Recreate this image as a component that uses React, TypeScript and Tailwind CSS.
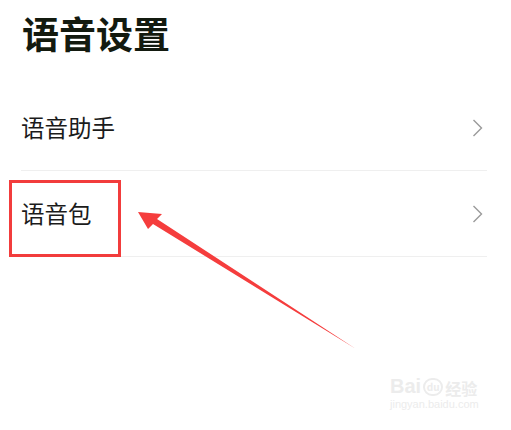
const cjk = { fontFamily: '"Noto Sans CJK SC", "Noto Sans", sans-serif' };

const Chevron = () => (
  <svg width="11" height="18" viewBox="0 0 11 18" fill="none" className="shrink-0">
    <polyline points="1.5,1 9.5,9 1.5,17" stroke="#9a9a9a" strokeWidth="1.4" />
  </svg>
);

const Row = ({ label }: { label: string }) => (
  <div className="flex h-[86px] items-center justify-between border-b border-[#efefef] pr-[4px]">
    <span className="text-[23.5px] leading-none text-[#1b1b1b]">{label}</span>
    <Chevron />
  </div>
);

export default function App() {
  return (
    <div className="relative h-[430px] w-[511px] overflow-hidden bg-white" style={cjk}>
      <div className="pl-[21px]">
        <h1 className="pl-[1px] pt-[15px] text-[37px] font-bold leading-none text-[#131a0f]">
          语音设置
        </h1>
        <div className="mt-[33px] w-[466px]">
          <Row label="语音助手" />
          <Row label="语音包" />
        </div>
      </div>

      {/* annotation box */}
      <div className="absolute left-[9px] top-[180px] h-[77px] w-[112px] border-[3px] border-[#f23c3c]" />

      {/* annotation arrow */}
      <svg className="absolute left-0 top-0" width="511" height="430" viewBox="0 0 511 430">
        <path
          d="M138 212 L162 214 L157 219 L356 349 L153 224 L148 229 Z"
          fill="#f53d3d"
        />
      </svg>

      {/* watermark */}
      <div className="absolute left-[390px] top-[376px] flex flex-col text-[#ececec]">
        <div className="flex items-end gap-[2px]">
          <span className="text-[20px] font-bold leading-none" style={{ fontFamily: '"Liberation Sans", sans-serif' }}>
            Bai
          </span>
          <span className="flex h-[18px] w-[20px] items-center justify-center rounded-full border-2 border-[#ececec] text-[10px] font-bold leading-none">
            du
          </span>
          <span className="text-[16px] font-bold leading-none">经验</span>
        </div>
        <span className="mt-[3px] text-[11px] leading-none" style={{ fontFamily: '"Liberation Sans", sans-serif' }}>
          jingyan.baidu.com
        </span>
      </div>
    </div>
  );
}
